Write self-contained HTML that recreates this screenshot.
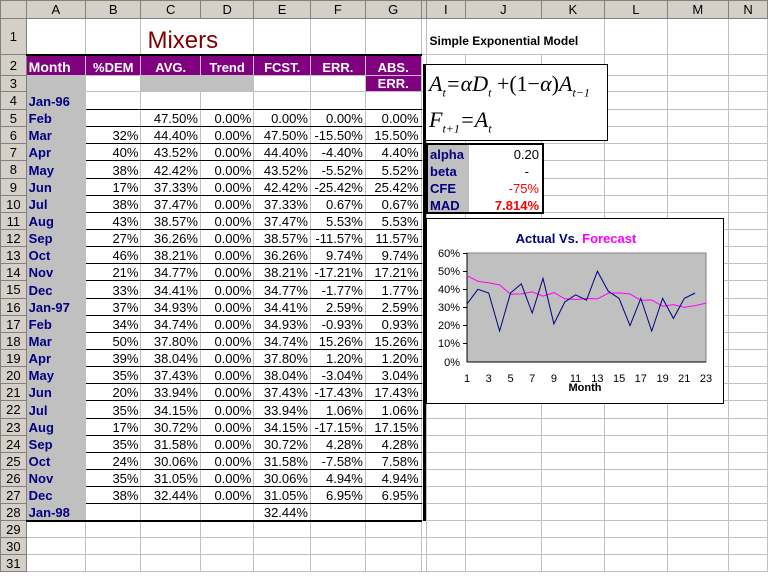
<!DOCTYPE html>
<html><head><meta charset="utf-8">
<style>
*{box-sizing:border-box;margin:0;padding:0}
body{width:768px;height:578px;overflow:hidden;background:#fff;font-family:"Liberation Sans",Arial,sans-serif;font-size:13px;position:relative}
table{border-collapse:collapse;table-layout:fixed;position:absolute;left:0;top:0}
td{border:1px solid #c0c0c0;padding:0 2px;white-space:nowrap;overflow:hidden;text-align:right;vertical-align:bottom;line-height:15px}
td:nth-child(9){padding:0}
tr.h td{background:#d4d0c8;text-align:center;border-color:#808080;font-size:13px;vertical-align:middle}
td.rh{background:#d4d0c8;text-align:center;border-color:#808080;font-size:13px;vertical-align:middle}
td.a{background:#c0c0c0;color:#000080;font-weight:bold;text-align:left}
tr.p td.x{background:#800080;color:#fff;font-weight:bold;text-align:center}
td.g{background:#c0c0c0}
tr.d td.b{border-bottom:1px solid #000}
.box{position:absolute;background:#fff;border:1px solid #000}
</style></head><body>
<table>
<colgroup><col style="width:26px"><col style="width:60px"><col style="width:56px"><col style="width:60px"><col style="width:54px"><col style="width:57px"><col style="width:55px"><col style="width:56px"><col style="width:4px"><col style="width:40px"><col style="width:76px"><col style="width:64px"><col style="width:65px"><col style="width:64px"><col style="width:40px"></colgroup>
<tr class="h" style="height:18px"><td></td><td>A</td><td>B</td><td>C</td><td>D</td><td>E</td><td>F</td><td>G</td><td></td><td>I</td><td>J</td><td>K</td><td>L</td><td>M</td><td>N</td></tr>
<tr style="height:36px"><td class="rh">1</td><td></td><td></td><td style="text-align:left;color:#800000;font-size:24px;line-height:26px;font-family:'Liberation Sans Narrow','Liberation Sans',sans-serif;padding-left:6px;overflow:visible" colspan="2">Mixers</td><td></td><td></td><td></td><td></td><td colspan="3" style="text-align:left;font-weight:bold;font-size:12px;padding:0 0 5px 3px;overflow:visible">Simple Exponential Model</td><td></td><td></td><td></td></tr>
<tr class="p" style="height:21px"><td class="rh">2</td><td class="x" style="text-align:left;font-size:14px;border-top:2px solid #000">Month</td><td class="x" style="border-top:2px solid #000">%DEM</td><td class="x" style="border-top:2px solid #000">AVG.</td><td class="x" style="border-top:2px solid #000">Trend</td><td class="x" style="border-top:2px solid #000">FCST.</td><td class="x" style="border-top:2px solid #000">ERR.</td><td class="x" style="border-top:2px solid #000">ABS.</td><td></td><td></td><td></td><td></td><td></td><td></td><td></td></tr>
<tr class="p" style="height:16px"><td class="rh">3</td><td class="g"></td><td></td><td class="g"></td><td class="g"></td><td></td><td></td><td class="x">ERR.</td><td></td><td></td><td></td><td></td><td></td><td></td><td></td></tr>
<tr class="d" style="height:18px"><td class="rh">4</td><td class="a">Jan-96</td><td class="b"></td><td class="b"></td><td class="b"></td><td class="b"></td><td class="b"></td><td class="b"></td><td></td><td></td><td></td><td></td><td></td><td></td><td></td></tr>
<tr class="d" style="height:17px"><td class="rh">5</td><td class="a">Feb</td><td class="b"></td><td class="b">47.50%</td><td class="b">0.00%</td><td class="b">0.00%</td><td class="b">0.00%</td><td class="b">0.00%</td><td></td><td></td><td></td><td></td><td></td><td></td><td></td></tr>
<tr class="d" style="height:17px"><td class="rh">6</td><td class="a">Mar</td><td class="b">32%</td><td class="b">44.40%</td><td class="b">0.00%</td><td class="b">47.50%</td><td class="b">-15.50%</td><td class="b">15.50%</td><td></td><td></td><td></td><td></td><td></td><td></td><td></td></tr>
<tr class="d" style="height:17px"><td class="rh">7</td><td class="a">Apr</td><td class="b">40%</td><td class="b">43.52%</td><td class="b">0.00%</td><td class="b">44.40%</td><td class="b">-4.40%</td><td class="b">4.40%</td><td></td><td></td><td></td><td></td><td></td><td></td><td></td></tr>
<tr class="d" style="height:18px"><td class="rh">8</td><td class="a">May</td><td class="b">38%</td><td class="b">42.42%</td><td class="b">0.00%</td><td class="b">43.52%</td><td class="b">-5.52%</td><td class="b">5.52%</td><td></td><td></td><td></td><td></td><td></td><td></td><td></td></tr>
<tr class="d" style="height:17px"><td class="rh">9</td><td class="a">Jun</td><td class="b">17%</td><td class="b">37.33%</td><td class="b">0.00%</td><td class="b">42.42%</td><td class="b">-25.42%</td><td class="b">25.42%</td><td></td><td></td><td></td><td></td><td></td><td></td><td></td></tr>
<tr class="d" style="height:17px"><td class="rh">10</td><td class="a">Jul</td><td class="b">38%</td><td class="b">37.47%</td><td class="b">0.00%</td><td class="b">37.33%</td><td class="b">0.67%</td><td class="b">0.67%</td><td></td><td></td><td></td><td></td><td></td><td></td><td></td></tr>
<tr class="d" style="height:17px"><td class="rh">11</td><td class="a">Aug</td><td class="b">43%</td><td class="b">38.57%</td><td class="b">0.00%</td><td class="b">37.47%</td><td class="b">5.53%</td><td class="b">5.53%</td><td></td><td></td><td></td><td></td><td></td><td></td><td></td></tr>
<tr class="d" style="height:17px"><td class="rh">12</td><td class="a">Sep</td><td class="b">27%</td><td class="b">36.26%</td><td class="b">0.00%</td><td class="b">38.57%</td><td class="b">-11.57%</td><td class="b">11.57%</td><td></td><td></td><td></td><td></td><td></td><td></td><td></td></tr>
<tr class="d" style="height:17px"><td class="rh">13</td><td class="a">Oct</td><td class="b">46%</td><td class="b">38.21%</td><td class="b">0.00%</td><td class="b">36.26%</td><td class="b">9.74%</td><td class="b">9.74%</td><td></td><td></td><td></td><td></td><td></td><td></td><td></td></tr>
<tr class="d" style="height:17px"><td class="rh">14</td><td class="a">Nov</td><td class="b">21%</td><td class="b">34.77%</td><td class="b">0.00%</td><td class="b">38.21%</td><td class="b">-17.21%</td><td class="b">17.21%</td><td></td><td></td><td></td><td></td><td></td><td></td><td></td></tr>
<tr class="d" style="height:18px"><td class="rh">15</td><td class="a">Dec</td><td class="b">33%</td><td class="b">34.41%</td><td class="b">0.00%</td><td class="b">34.77%</td><td class="b">-1.77%</td><td class="b">1.77%</td><td></td><td></td><td></td><td></td><td></td><td></td><td></td></tr>
<tr class="d" style="height:17px"><td class="rh">16</td><td class="a">Jan-97</td><td class="b">37%</td><td class="b">34.93%</td><td class="b">0.00%</td><td class="b">34.41%</td><td class="b">2.59%</td><td class="b">2.59%</td><td></td><td></td><td></td><td></td><td></td><td></td><td></td></tr>
<tr class="d" style="height:17px"><td class="rh">17</td><td class="a">Feb</td><td class="b">34%</td><td class="b">34.74%</td><td class="b">0.00%</td><td class="b">34.93%</td><td class="b">-0.93%</td><td class="b">0.93%</td><td></td><td></td><td></td><td></td><td></td><td></td><td></td></tr>
<tr class="d" style="height:17px"><td class="rh">18</td><td class="a">Mar</td><td class="b">50%</td><td class="b">37.80%</td><td class="b">0.00%</td><td class="b">34.74%</td><td class="b">15.26%</td><td class="b">15.26%</td><td></td><td></td><td></td><td></td><td></td><td></td><td></td></tr>
<tr class="d" style="height:17px"><td class="rh">19</td><td class="a">Apr</td><td class="b">39%</td><td class="b">38.04%</td><td class="b">0.00%</td><td class="b">37.80%</td><td class="b">1.20%</td><td class="b">1.20%</td><td></td><td></td><td></td><td></td><td></td><td></td><td></td></tr>
<tr class="d" style="height:17px"><td class="rh">20</td><td class="a">May</td><td class="b">35%</td><td class="b">37.43%</td><td class="b">0.00%</td><td class="b">38.04%</td><td class="b">-3.04%</td><td class="b">3.04%</td><td></td><td></td><td></td><td></td><td></td><td></td><td></td></tr>
<tr class="d" style="height:17px"><td class="rh">21</td><td class="a">Jun</td><td class="b">20%</td><td class="b">33.94%</td><td class="b">0.00%</td><td class="b">37.43%</td><td class="b">-17.43%</td><td class="b">17.43%</td><td></td><td></td><td></td><td></td><td></td><td></td><td></td></tr>
<tr class="d" style="height:18px"><td class="rh">22</td><td class="a">Jul</td><td class="b">35%</td><td class="b">34.15%</td><td class="b">0.00%</td><td class="b">33.94%</td><td class="b">1.06%</td><td class="b">1.06%</td><td></td><td></td><td></td><td></td><td></td><td></td><td></td></tr>
<tr class="d" style="height:17px"><td class="rh">23</td><td class="a">Aug</td><td class="b">17%</td><td class="b">30.72%</td><td class="b">0.00%</td><td class="b">34.15%</td><td class="b">-17.15%</td><td class="b">17.15%</td><td></td><td></td><td></td><td></td><td></td><td></td><td></td></tr>
<tr class="d" style="height:17px"><td class="rh">24</td><td class="a">Sep</td><td class="b">35%</td><td class="b">31.58%</td><td class="b">0.00%</td><td class="b">30.72%</td><td class="b">4.28%</td><td class="b">4.28%</td><td></td><td></td><td></td><td></td><td></td><td></td><td></td></tr>
<tr class="d" style="height:17px"><td class="rh">25</td><td class="a">Oct</td><td class="b">24%</td><td class="b">30.06%</td><td class="b">0.00%</td><td class="b">31.58%</td><td class="b">-7.58%</td><td class="b">7.58%</td><td></td><td></td><td></td><td></td><td></td><td></td><td></td></tr>
<tr class="d" style="height:17px"><td class="rh">26</td><td class="a">Nov</td><td class="b">35%</td><td class="b">31.05%</td><td class="b">0.00%</td><td class="b">30.06%</td><td class="b">4.94%</td><td class="b">4.94%</td><td></td><td></td><td></td><td></td><td></td><td></td><td></td></tr>
<tr class="d" style="height:17px"><td class="rh">27</td><td class="a">Dec</td><td class="b">38%</td><td class="b">32.44%</td><td class="b">0.00%</td><td class="b">31.05%</td><td class="b">6.95%</td><td class="b">6.95%</td><td></td><td></td><td></td><td></td><td></td><td></td><td></td></tr>
<tr class="d" style="height:17px"><td class="rh">28</td><td class="a" style="border-bottom:2px solid #000">Jan-98</td><td style="border-bottom:2px solid #000"></td><td style="border-bottom:2px solid #000"></td><td style="border-bottom:2px solid #000"></td><td style="border-bottom:2px solid #000">32.44%</td><td style="border-bottom:2px solid #000"></td><td style="border-bottom:2px solid #000"></td><td></td><td></td><td></td><td></td><td></td><td></td><td></td></tr>
<tr style="height:17px"><td class="rh">29</td><td></td><td></td><td></td><td></td><td></td><td></td><td></td><td></td><td></td><td></td><td></td><td></td><td></td><td></td></tr>
<tr style="height:17px"><td class="rh">30</td><td></td><td></td><td></td><td></td><td></td><td></td><td></td><td></td><td></td><td></td><td></td><td></td><td></td><td></td></tr>
<tr style="height:17px"><td class="rh">31</td><td></td><td></td><td></td><td></td><td></td><td></td><td></td><td></td><td></td><td></td><td></td><td></td><td></td><td></td></tr>
</table>
<div style="position:absolute;left:423px;top:64px;width:3px;height:457px;background:#000"></div>
<div class="box" style="left:425px;top:64px;width:183px;height:77px;font-family:'Liberation Serif',serif;font-style:italic;font-size:22px;line-height:26px;padding:6px 0 0 3px;white-space:nowrap;overflow:hidden">
<div>A<sub style="font-size:12px">t</sub>=<span>α</span>D<sub style="font-size:12px">t</sub> <span style="font-style:normal">+(1−</span>α<span style="font-style:normal">)</span>A<sub style="font-size:12px">t−1</sub></div>
<div style="margin-top:2px">F<sub style="font-size:12px">t+1</sub>=A<sub style="font-size:12px">t</sub></div>
</div>
<div class="box" style="left:426px;top:143px;width:118px;height:71px;border:2px solid #000;font-weight:bold">
<div style="position:absolute;left:0;top:0;width:40px;height:67px;background:#c0c0c0"></div>
<div style="position:absolute;left:2px;top:1px;color:#000080;line-height:17px;font-size:13px">alpha<br>beta<br>CFE<br>MAD</div>
<div style="position:absolute;right:3px;top:1px;text-align:right;line-height:17px;font-size:13px"><span style="font-weight:normal">0.20</span><br><span style="font-weight:normal;padding-right:10px">-</span><br><span style="color:#f00;font-weight:normal">-75%</span><br><span style="color:#f00">7.814%</span></div>
<div style="position:absolute;left:40px;top:0;width:1px;height:67px;background:#c0c0c0"></div>
</div>
<svg style="position:absolute;left:0;top:0" width="768" height="578" font-family="Liberation Sans, Arial, sans-serif">
<rect x="426.5" y="218.5" width="297" height="185" fill="#fff" stroke="#000"/>
<text x="576" y="243" text-anchor="middle" font-size="13" font-weight="bold"><tspan fill="#000080">Actual Vs. </tspan><tspan fill="#ff00ff">Forecast</tspan></text>
<rect x="467" y="253" width="239" height="109" fill="#c0c0c0" stroke="#808080"/>
<g stroke="#000" stroke-width="1">
<line x1="467" y1="253" x2="467" y2="362"/><line x1="467" y1="362" x2="706" y2="362"/>
<line x1="463" y1="253.5" x2="467" y2="253.5"/><line x1="463" y1="271.5" x2="467" y2="271.5"/><line x1="463" y1="289.5" x2="467" y2="289.5"/><line x1="463" y1="307.5" x2="467" y2="307.5"/><line x1="463" y1="325.5" x2="467" y2="325.5"/><line x1="463" y1="343.5" x2="467" y2="343.5"/>
</g>
<g font-size="11" text-anchor="end" fill="#000">
<text x="460" y="257">60%</text><text x="460" y="275">50%</text><text x="460" y="293">40%</text><text x="460" y="311">30%</text><text x="460" y="329">20%</text><text x="460" y="347">10%</text><text x="460" y="366">0%</text>
</g>
<g font-size="11" text-anchor="middle">
<text x="467" y="382">1</text><text x="488.7" y="382">3</text><text x="510.5" y="382">5</text><text x="532.2" y="382">7</text><text x="553.9" y="382">9</text><text x="575.6" y="382">11</text><text x="597.4" y="382">13</text><text x="619.1" y="382">15</text><text x="640.8" y="382">17</text><text x="662.6" y="382">19</text><text x="684.3" y="382">21</text><text x="706" y="382">23</text>
<text x="585" y="391" font-weight="bold">Month</text>
</g>
<polyline fill="none" stroke="#ff00ff" stroke-width="1" points="467,275.7 477.9,281.3 488.7,282.9 499.6,284.9 510.5,294.2 521.3,293.9 532.2,291.9 543,296.1 553.9,292.6 564.8,298.8 575.6,299.5 586.5,298.5 597.4,298.9 608.2,293.3 619.1,292.9 630,294 640.8,300.3 651.7,300 662.6,306.2 673.4,304.6 684.3,307.4 695.1,305.6 706,303.1"/>
<polyline fill="none" stroke="#000080" stroke-width="1" points="467,303.9 477.9,289.3 488.7,293 499.6,331.1 510.5,293 521.3,283.9 532.2,313 543,278.4 553.9,323.9 564.8,302 575.6,294.8 586.5,300.2 597.4,271.2 608.2,291.1 619.1,298.4 630,325.7 640.8,298.4 651.7,331.1 662.6,298.4 673.4,318.4 684.3,298.4 695.1,293"/>
</svg>
</body></html>
